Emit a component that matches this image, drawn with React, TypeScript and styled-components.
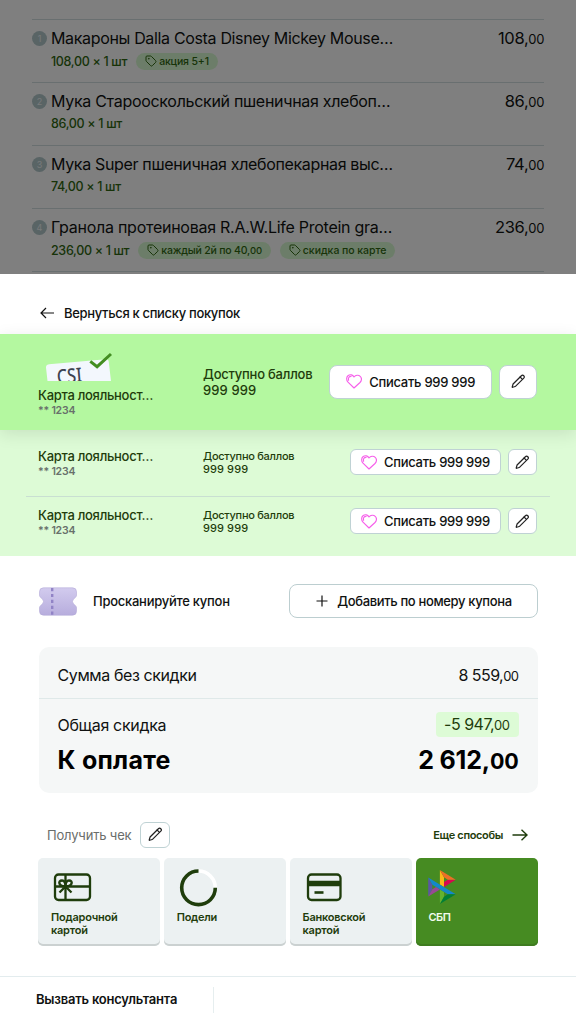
import React from "react";
import styled, { createGlobalStyle } from "styled-components";
import { Pencil, Tag } from "lucide-react";

const GlobalStyle = createGlobalStyle`
  *, *::before, *::after { box-sizing: border-box; }
  body {
    margin: 0;
    background: #fff;
    color: #101211;
    font-family: Inter, "Noto Sans", sans-serif;
  }
  button { font: inherit; color: inherit; cursor: pointer; padding: 0; }
`;

const darkGreen = "#1f3d0c";

type Track = { $track?: number };

const Label = styled.span<Track>`
  letter-spacing: ${(p) => p.$track ?? 0}px;
  white-space: nowrap;
`;

const Screen = styled.main`
  width: 576px;
  height: 1024px;
  display: flex;
  flex-direction: column;
  overflow: hidden;
`;

/* Cart list behind the sheet */
const Cart = styled.section`
  position: relative;
  height: 274px;
  padding: 19px 32px 0;
  flex: none;
  &::after {
    content: "";
    position: absolute;
    inset: 0;
    background: rgba(0, 0, 0, 0.5);
  }
`;

const CartRow = styled.article`
  height: 63px;
  border-top: 1px solid #d3dfe1;
  display: grid;
  grid-template-columns: 19px 1fr auto;
  padding-top: 7px;
`;

const CartEnd = styled.div`
  height: 1px;
  background: #d3dfe1;
`;

const Index = styled.span`
  width: 15px;
  height: 15px;
  margin-top: 4px;
  border-radius: 50%;
  background: #b3c8cb;
  color: #eef4f5;
  font-size: 9px;
  line-height: 15px;
  text-align: center;
`;

const ItemTitle = styled.div`
  font-size: 16px;
  line-height: 22px;
`;

const ItemMeta = styled.div<{ $plain: boolean }>`
  display: flex;
  align-items: center;
  height: 18px;
  margin-top: ${(p) => (p.$plain ? 2 : 3)}px;
  font-size: 12.5px;
  font-weight: 500;
  color: #2f6710;
`;

const Promo = styled.span`
  display: flex;
  align-items: center;
  gap: 2px;
  height: 17px;
  margin-left: 9px;
  padding: 0 9px;
  border-radius: 9px;
  background: #d9fbd2;
  font-size: 10.5px;
  svg { flex: none; }
`;

const Price = styled.div`
  font-size: 16.5px;
  line-height: 22px;
  letter-spacing: -0.35px;
`;

const Cents = styled.span<{ $size: number }>`
  font-size: ${(p) => p.$size}px;
`;

/* Bottom sheet */
const Back = styled.button`
  flex: none;
  height: 60px;
  display: flex;
  align-items: center;
  gap: 10px;
  border: 0;
  background: none;
  padding: 18px 0 0 40px;
  font-size: 13px;
  font-weight: 500;
`;

const Loyalty = styled.section<{ $main?: boolean }>`
  flex: none;
  position: relative;
  z-index: ${(p) => (p.$main ? 1 : 0)};
  height: ${(p) => (p.$main ? 96 : 126)}px;
  padding: ${(p) => (p.$main ? "0 38.6px 0 38px" : "4px 26px 0")};
  background: ${(p) => (p.$main ? "#b4f8a0" : "#ddfbd6")};
  box-shadow: ${(p) => (p.$main ? "0 4px 16px rgba(0,0,0,0.1)" : "none")};
`;

const CardRow = styled.div<{ $main?: boolean; $line?: boolean }>`
  display: grid;
  grid-template-columns: 165px 1fr auto;
  height: ${(p) => (p.$main ? 96 : p.$line ? 63 : 59)}px;
  padding: ${(p) => (p.$main ? "18px 0 0" : p.$line ? "14px 12.6px 0 12px" : "10px 12.6px 0 12px")};
  border-bottom: ${(p) => (p.$line ? "1px solid #c9dfd2" : "0")};
`;

const CardName = styled.div`
  font-size: 13px;
  line-height: 17px;
  font-weight: 500;
  color: ${darkGreen};
`;

const CardNumber = styled.div`
  font-size: 10.5px;
  line-height: 13px;
  font-weight: 600;
  color: #68706b;
`;

const Logo = styled.svg`
  display: block;
  margin: 0 0 6px 8px;
`;

const Points = styled.div<{ $main?: boolean }>`
  padding-top: ${(p) => (p.$main ? 15 : 2)}px;
  font-size: ${(p) => (p.$main ? 13 : 11)}px;
  line-height: ${(p) => (p.$main ? 15.5 : 12.6)}px;
  font-weight: 500;
  color: ${darkGreen};
  display: flex;
  flex-direction: column;
`;

const Actions = styled.div<{ $main?: boolean }>`
  display: flex;
  gap: 7px;
  padding-top: ${(p) => (p.$main ? 12.5 : 1)}px;
`;

const Redeem = styled.button<{ $main?: boolean }>`
  width: ${(p) => (p.$main ? 163.5 : 151)}px;
  height: ${(p) => (p.$main ? 34 : 26)}px;
  display: flex;
  align-items: center;
  justify-content: center;
  gap: 7px;
  border: 1px solid #bfd2d4;
  border-radius: ${(p) => (p.$main ? 8 : 6)}px;
  background: #fff;
  font-size: 13px;
  font-weight: 500;
`;

const Edit = styled.button<{ $w: number; $h: number }>`
  width: ${(p) => p.$w}px;
  height: ${(p) => p.$h}px;
  display: grid;
  place-items: center;
  border: 1px solid #bfd2d4;
  border-radius: ${(p) => (p.$h > 30 ? 8 : 6)}px;
  background: #fff;
`;

const Coupon = styled.section`
  flex: none;
  height: 91px;
  padding: 0 38.5px 1px 39px;
  display: grid;
  grid-template-columns: 54px 1fr 249px;
  align-items: center;
  font-size: 13px;
  font-weight: 500;
`;

const AddCoupon = styled.button`
  height: 34px;
  display: flex;
  align-items: center;
  justify-content: center;
  gap: 9px;
  padding-left: 2px;
  border: 1px solid #bcced0;
  border-radius: 8px;
  background: #fff;
  font-weight: 500;
`;

const Summary = styled.section`
  flex: none;
  height: 146px;
  margin: 0 38.5px;
  border-radius: 10px;
  background: #f5f7f7;
`;

const Subtotal = styled.div`
  height: 52px;
  border-bottom: 1px solid #dfe9e9;
  display: flex;
  justify-content: space-between;
  align-items: center;
  padding: 5px 19px 0;
  font-size: 16px;
`;

const Discount = styled.div`
  display: flex;
  justify-content: space-between;
  align-items: center;
  padding: 13px 19px 0;
  font-size: 16px;
`;

const DiscountValue = styled.span`
  width: 83px;
  height: 25px;
  padding-right: 9px;
  border-radius: 4px;
  background: #ddfbd6;
  color: ${darkGreen};
  line-height: 25px;
  text-align: right;
`;

const Total = styled.div`
  display: flex;
  justify-content: space-between;
  padding: 7px 19px 0;
  font-size: 25px;
  line-height: 32px;
  font-weight: 700;
  color: #000;
`;

const PayHeader = styled.div`
  flex: none;
  height: 65px;
  padding: 18px 48px 0 47px;
  display: flex;
  align-items: center;
  font-size: 13px;
  color: #6a6d6b;
`;

const Receipt = styled.div`
  display: flex;
  align-items: center;
  gap: 9px;
  flex: 1;
`;

const More = styled.button`
  display: flex;
  align-items: center;
  gap: 9px;
  border: 0;
  background: none;
  font-size: 11px;
  font-weight: 600;
  color: ${darkGreen};
`;

const Methods = styled.section`
  flex: none;
  display: grid;
  grid-template-columns: repeat(4, 1fr);
  gap: 4px;
  margin: 0 38.4px;
`;

const Method = styled.button<{ $active?: boolean }>`
  height: 88px;
  display: flex;
  flex-direction: column;
  align-items: flex-start;
  padding: 11px 0 0 12.6px;
  border: 0;
  border-radius: 5px;
  text-align: left;
  font-size: 11px;
  line-height: 13px;
  font-weight: 600;
  background: ${(p) => (p.$active ? "#468b22" : "#ecf1f2")};
  color: ${(p) => (p.$active ? "#f2fbee" : darkGreen)};
  box-shadow: inset 0 -2px 0 ${(p) => (p.$active ? "#3f7c20" : "#cbd1d1")};
`;

const MethodIcon = styled.span`
  height: 42px;
  display: flex;
`;

const SbpMark = styled.svg`
  margin-top: 1px;
`;

const Footer = styled.footer`
  margin-top: 30px;
  height: 47px;
  flex: none;
  border-top: 1px solid #e3ecee;
  display: flex;
  align-items: center;
  padding-left: 36px;
  font-size: 13px;
  font-weight: 600;
`;

const FooterCell = styled.div`
  width: 178px;
  height: 26px;
  line-height: 25px;
  border-right: 1px solid #e6eeef;
`;

const PenIcon = () => <Pencil size={14.5} strokeWidth={2} color="#222" />;

const HeartIcon = () => (
  <svg width="16" height="15" viewBox="0 0 16 15" fill="none" stroke="#f65fea" strokeWidth="1.150" strokeLinejoin="round" strokeLinecap="round">
    <path d="M8 14 2 8.200C.1 6.200.2 3 2.200 1.500 4.200.2 6.800.7 8 3 9.600 1 12.500.7 14.200 2.300 16 4 15.800 6.700 14 8.500Z" />
    <path d="M2.600 6.200C1.900 4.200 3 2.400 5 2.400" />
  </svg>
);

const TicketIcon = () => (
  <svg width="38" height="29" viewBox="0 0 38 29">
    <defs>
      <linearGradient id="ticket" x1="0" y1="0" x2="0" y2="1">
        <stop offset="0" stopColor="#d2cbee" />
        <stop offset="1" stopColor="#b7addd" />
      </linearGradient>
    </defs>
    <path d="M4.500.8h29a4 4 0 0 1 4 4v3.700c0 1.800-4 3.700-4 6s4 4.200 4 6v3.700a4 4 0 0 1-4 4h-29a4 4 0 0 1-4-4v-3.700c0-1.800 4-3.700 4-6s-4-4.200-4-6V4.800a4 4 0 0 1 4-4Z" fill="url(#ticket)" stroke="#b3aad6" strokeWidth=".6" />
    <path d="M13.200 1v27" stroke="#9183c6" strokeWidth="2.400" strokeDasharray="3.200 2.700" />
  </svg>
);

const CardLogo = () => (
  <Logo width="66" height="29" viewBox="0 0 66 29">
    <path d="M0 15.500Q-.2 12.600 3 12.200L60 7.200Q62.500 7 62.700 9.500L65 29H1.500Z" fill="#f3f7fd" />
    <text x="11.500" y="32" transform="rotate(-5 11 32)" fontFamily="'Noto Sans', sans-serif" fontWeight="500" fontSize="20" textLength="25" lengthAdjust="spacingAndGlyphs" fill="#3d4250">CSI</text>
    <path d="m44.300 9.300 6.800 5.400L65 2" fill="none" stroke="#438e22" strokeWidth="3" />
  </Logo>
);

const GiftIcon = () => (
  <svg width="43" height="38" viewBox="0 0 43 38" fill="none" stroke={darkGreen} strokeWidth="2.300">
    <rect x="4" y="5.500" width="35" height="25.500" rx="3.500" />
    <path d="M4 17.500h35M14.500 6v25" />
    <path d="M14.500 17.500c-7 0-8-6-3.500-6 2.500 0 3.500 2.500 3.500 6Zm0 0c7 0 8-6 3.500-6-2.500 0-3.500 2.500-3.500 6Zm0 0-6 6m6-6 6 6" />
  </svg>
);

const RingIcon = () => (
  <svg width="43" height="38" viewBox="0 0 43 38" fill="none" strokeWidth="3.600">
    <path d="M21.500 2A16.800 16.800 0 0 1 38.300 18.800" stroke="#fff" />
    <path d="M38.300 18.800A16.800 16.800 0 1 1 21.500 2" stroke={darkGreen} />
  </svg>
);

const BankIcon = () => (
  <svg width="43" height="38" viewBox="0 0 43 38" fill="none" stroke={darkGreen} strokeWidth="2.300">
    <rect x="5" y="5.500" width="32.500" height="25.500" rx="3.500" />
    <path d="M5 14.600h32.500" strokeWidth="5.500" />
    <path d="M11.500 23.500h9" strokeWidth="2.600" />
  </svg>
);

const SbpIcon = () => (
  <SbpMark width="28" height="34" viewBox="0 0 97.300 120">
    <path fill="#5b57a2" d="M0 26.120l14.532 25.975v15.844L.017 93.863 0 26.120z" />
    <path fill="#d90751" d="M55.797 42.643l13.617-8.346 27.868-.026-41.485 25.414V42.643z" />
    <path fill="#fab718" d="M55.720 25.967l.077 34.390-14.566-8.950V0l14.490 25.967z" />
    <path fill="#ed6f26" d="M97.282 34.271l-27.869.026-13.693-8.330L41.231 0l56.050 34.271z" />
    <path fill="#63b22f" d="M55.797 94.007V77.322l-14.566-8.780.008 51.458 14.558-25.993z" />
    <path fill="#1487c9" d="M69.380 85.737L14.531 52.095 0 26.120l97.223 59.583-27.844.034z" />
    <path fill="#017f36" d="M41.240 120l14.556-25.993 13.583-8.270 27.843-.034L41.240 120z" />
    <path fill="#984995" d="M.017 93.863l41.333-25.320-13.896-8.526-12.922 7.922L.017 93.863z" />
  </SbpMark>
);

type Promotion = { text: React.ReactNode; track: number };
type Item = { title: string; track: number; meta: string; price: string; promos: Promotion[] };

const items: Item[] = [
  {
    title: "Макароны Dalla Costa Disney Mickey Mouse…",
    track: -0.34,
    meta: "108,00 × 1 шт",
    price: "108",
    promos: [{ text: "акция 5+1", track: -0.15 }],
  },
  { title: "Мука Старооскольский пшеничная хлебоп…", track: -0.3, meta: "86,00 × 1 шт", price: "86", promos: [] },
  { title: "Мука Super пшеничная хлебопекарная выс…", track: -0.34, meta: "74,00 × 1 шт", price: "74", promos: [] },
  {
    title: "Гранола протеиновая R.A.W.Life Protein gra…",
    track: -0.26,
    meta: "236,00 × 1 шт",
    price: "236",
    promos: [
      { text: <>каждый 2й по 40,<Cents $size={9.5}>00</Cents></>, track: -0.2 },
      { text: "скидка по карте", track: -0.05 },
    ],
  },
];

const LoyaltyCard = ({ main, line }: { main?: boolean; line?: boolean }) => (
  <CardRow $main={main} $line={line}>
    <div>
      {main && <CardLogo />}
      <CardName><Label $track={-0.28}>Карта лояльност…</Label></CardName>
      <CardNumber><Label $track={-0.2}>** 1234</Label></CardNumber>
    </div>
    <Points $main={main}>
      <Label $track={main ? -0.22 : -0.27}>Доступно баллов</Label>
      <Label $track={0.1}>999 999</Label>
    </Points>
    <Actions $main={main}>
      <Redeem $main={main}><HeartIcon /><Label $track={-0.27}>Списать 999 999</Label></Redeem>
      <Edit $w={main ? 38 : 29.5} $h={main ? 34 : 26} aria-label="Изменить"><PenIcon /></Edit>
    </Actions>
  </CardRow>
);

export default function App() {
  return (
    <Screen>
      <GlobalStyle />
      <Cart>
        {items.map((item, i) => (
          <CartRow key={item.title}>
            <Index>{i + 1}</Index>
            <div>
              <ItemTitle><Label $track={item.track}>{item.title}</Label></ItemTitle>
              <ItemMeta $plain={item.promos.length === 0}>
                <Label $track={-0.33}>{item.meta}</Label>
                {item.promos.map((promo, n) => (
                  <Promo key={n}><Tag size={12} strokeWidth={2} /><Label $track={promo.track}>{promo.text}</Label></Promo>
                ))}
              </ItemMeta>
            </div>
            <Price>{item.price},<Cents $size={13}>00</Cents></Price>
          </CartRow>
        ))}
        <CartEnd />
      </Cart>
      <Back>
        <svg width="14" height="12" viewBox="0 0 14 12" fill="none" stroke="#111" strokeWidth="1.200"><path d="M14 6H1M6 1 1 6l5 5" /></svg>
        <Label $track={-0.33}>Вернуться к списку покупок</Label>
      </Back>
      <Loyalty $main><LoyaltyCard main /></Loyalty>
      <Loyalty>
        <LoyaltyCard line />
        <LoyaltyCard />
      </Loyalty>
      <Coupon>
        <TicketIcon />
        <Label $track={-0.26}>Просканируйте купон</Label>
        <AddCoupon>
          <svg width="12" height="12" viewBox="0 0 12 12" stroke="#111" strokeWidth="1.200"><path d="M6 .5v11M.5 6h11" /></svg>
          <Label $track={-0.35}>Добавить по номеру купона</Label>
        </AddCoupon>
      </Coupon>
      <Summary>
        <Subtotal>
          <Label $track={-0.4}>Сумма без скидки</Label>
          <Label $track={-0.55}>8 559,<Cents $size={13}>00</Cents></Label>
        </Subtotal>
        <Discount>
          <Label $track={-0.32}>Общая скидка</Label>
          <DiscountValue><Label $track={-0.5}>-5 947,<Cents $size={13}>00</Cents></Label></DiscountValue>
        </Discount>
        <Total>
          <Label $track={0.25}>К оплате</Label>
          <Label $track={-0.2}>2 612,<Cents $size={21.5}>00</Cents></Label>
        </Total>
      </Summary>
      <PayHeader>
        <Receipt>
          <Label $track={-0.17}>Получить чек</Label>
          <Edit $w={29.5} $h={26} aria-label="Изменить"><PenIcon /></Edit>
        </Receipt>
        <More>
          <Label $track={-0.35}>Еще способы</Label>
          <svg width="16" height="12" viewBox="0 0 16 12" fill="none" stroke={darkGreen} strokeWidth="1.400"><path d="M.5 6h14.500M9.500.7 15 6l-5.500 5.300" /></svg>
        </More>
      </PayHeader>
      <Methods>
        <Method><MethodIcon><GiftIcon /></MethodIcon><Label $track={-0.22}>Подарочной<br />картой</Label></Method>
        <Method><MethodIcon><RingIcon /></MethodIcon><Label $track={-0.3}>Подели</Label></Method>
        <Method><MethodIcon><BankIcon /></MethodIcon><Label $track={-0.25}>Банковской<br />картой</Label></Method>
        <Method $active><MethodIcon><SbpIcon /></MethodIcon><Label $track={-0.45}>СБП</Label></Method>
      </Methods>
      <Footer><FooterCell><Label $track={-0.22}>Вызвать консультанта</Label></FooterCell></Footer>
    </Screen>
  );
}
